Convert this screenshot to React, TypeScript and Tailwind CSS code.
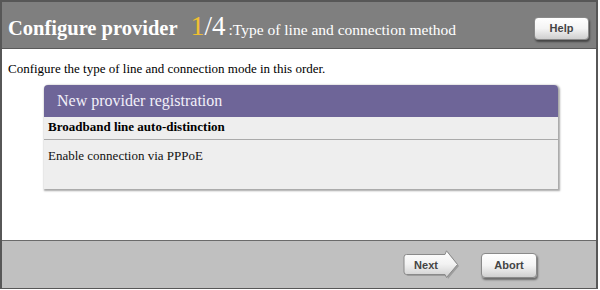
import React from 'react'

const serif = { fontFamily: '"Liberation Serif", "Times New Roman", serif' }

const GlossButton = ({ label, className = '' }: { label: string; className?: string }) => (
  <button
    className={`flex items-center justify-center rounded-[4px] border border-[#8a8a8a] bg-gradient-to-b from-white via-[#f4f4f4] to-[#cfcfcf] shadow-[1px_2px_2px_rgba(0,0,0,0.45)] font-['Liberation_Sans',Arial,sans-serif] text-[11px] font-bold text-[#444] ${className}`}
  >
    {label}
  </button>
)

const NextButton = () => (
  <button className="relative h-[29px] w-[58px] font-['Liberation_Sans',Arial,sans-serif] text-[11px] font-bold text-[#444]">
    <svg className="absolute inset-0" width="58" height="29" viewBox="0 0 58 29">
      <defs>
        <linearGradient id="nextGrad" x1="0" y1="0" x2="0" y2="1">
          <stop offset="0" stopColor="#ffffff" />
          <stop offset="0.5" stopColor="#f2f2f2" />
          <stop offset="1" stopColor="#cdcdcd" />
        </linearGradient>
      </defs>
      <path d="M5.5 5.5 H44 L45 1 L56 15 L45 28 L44 25 H5.5 Q3 25 3 22.5 V8 Q3 5.5 5.5 5.5 Z" fill="#7a7a7a" transform="translate(1 1)" opacity="0.5" />
      <path d="M4.5 4.5 H43 L44.5 0.8 L55.5 14.5 L44.5 27.5 L43 24.5 H4.5 Q2 24.5 2 22 V7 Q2 4.5 4.5 4.5 Z" fill="url(#nextGrad)" stroke="#8a8a8a" strokeWidth="1" />
    </svg>
    <span className="relative -ml-[10px] top-[1px]">Next</span>
  </button>
)

export default function App() {
  return (
    <div className="h-[290px] w-[600px] bg-white" style={serif}>
      <div className="flex h-[289px] w-[598px] flex-col border-2 border-b border-[#575757]">
        {/* Header */}
        <div className="flex h-[46px] items-center justify-between bg-[#7f7f7f] pl-[6px] pr-[7px]">
          <div className="flex items-baseline pt-[6px] text-white">
            <span className="text-[20.5px] font-bold">Configure provider</span>
            <span className="ml-[13px] text-[28px] leading-none text-[#f0c030]">1</span>
            <span className="text-[27px] leading-none">/4</span>
            <span className="ml-[3px] text-[15.5px]">:Type of line and connection method</span>
          </div>
          <GlossButton label="Help" className="mt-[6px] h-[23px] w-[55px]" />
        </div>

        {/* Body */}
        <div className="flex-1 border-t border-[#5a5a5a] bg-white pt-[12px]">
          <p className="pl-[6px] text-[13px] leading-[16px] text-black">
            Configure the type of line and connection mode in this order.
          </p>
          <div className="ml-[42px] mt-[8px] w-[514px] rounded-t-[4px] bg-[#eeeeee] shadow-[1px_1px_2px_1px_rgba(0,0,0,0.35)]">
            <div className="flex h-[32px] items-center rounded-t-[4px] bg-[#6e6598] pl-[13px] text-[16px] text-[#f2f0f8]">
              New provider registration
            </div>
            <div className="border-b border-[#aaaaaa] pb-[4px] pl-[4px] pt-[2px] text-[13px] font-bold leading-[16px] text-black">
              Broadband line auto-distinction
            </div>
            <div className="h-[49px] pl-[4px] pt-[8px] text-[13px] leading-[16px] text-[#111]">
              Enable connection via PPPoE
            </div>
          </div>
        </div>

        {/* Footer */}
        <div className="flex h-[48px] items-center justify-end gap-[21px] border-t border-[#6a6a6a] bg-[#c0c0c0] pr-[59px]">
          <NextButton />
          <GlossButton label="Abort" className="mt-[1px] h-[25px] w-[56px]" />
        </div>
      </div>
    </div>
  )
}
